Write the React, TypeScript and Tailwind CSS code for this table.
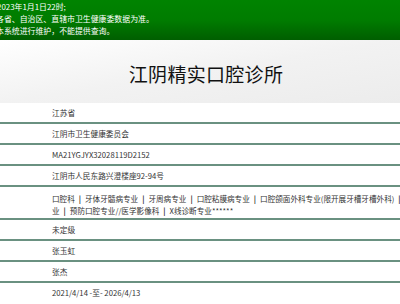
const rows: { text?: string; multi?: boolean }[] = [
  { text: '江苏省' },
  { text: '江阴市卫生健康委员会' },
  { text: 'MA21YGJYX32028119D2152' },
  { text: '江阴市人民东路兴澄楼座92-94号' },
  { multi: true },
  { text: '未定级' },
  { text: '张玉虹' },
  { text: '张杰' },
  { text: '2021/4/14 -至- 2026/4/13' },
];

function Bar() {
  return <span className="mx-[4px] font-bold text-[#333]">|</span>;
}

export default function App() {
  return (
    <div className="w-[400px] h-[304px] overflow-hidden bg-white font-['Noto_Sans_CJK_SC',sans-serif]">
      <div className="h-[40px] bg-gradient-to-b from-[#008300] via-[#007c00] to-[#005e00] text-white text-[7.9px] leading-[12px] pt-[1px] overflow-hidden whitespace-nowrap">
        <div className="ml-[-3px]">2023年1月1日22时;</div>
        <div className="ml-[-4px]">各省、自治区、直辖市卫生健康委数据为准。</div>
        <div className="ml-[-4px]">本系统进行维护，不能提供查询。</div>
      </div>

      <div className="h-[63px] bg-gradient-to-br from-white via-[#f2f2f2] to-[#ececec] flex items-center justify-center pt-[6px] pl-[12px]">
        <h1 className="text-[19px] text-[#111] font-normal tracking-[0.3px]">江阴精实口腔诊所</h1>
      </div>

      {rows.map((row, i) => (
        <div
          key={i}
          className={
            i === rows.length - 1
              ? 'flex'
              : 'flex border-b-2 border-[#6a9181]'
          }
        >
          <div className="w-[52px] shrink-0" />
          <div
            className={
              row.multi
                ? 'flex-1 overflow-hidden whitespace-nowrap text-[7.6px] leading-[11.5px] pt-[6px] pb-[2px] text-[#333]'
                : 'flex-1 text-[7.7px] leading-[11px] py-[4px] text-[#333]'
            }
          >
            {row.multi ? (
              <>
                <div>
                  口腔科<Bar />牙体牙髓病专业<Bar />牙周病专业<Bar />口腔粘膜病专业<Bar />口腔颌面外科专业(限开展牙槽牙槽外科)<Bar />口腔正畸专
                </div>
                <div>
                  业<Bar />预防口腔专业//医学影像科<Bar />X线诊断专业******
                </div>
              </>
            ) : (
              row.text
            )}
          </div>
        </div>
      ))}
    </div>
  );
}
